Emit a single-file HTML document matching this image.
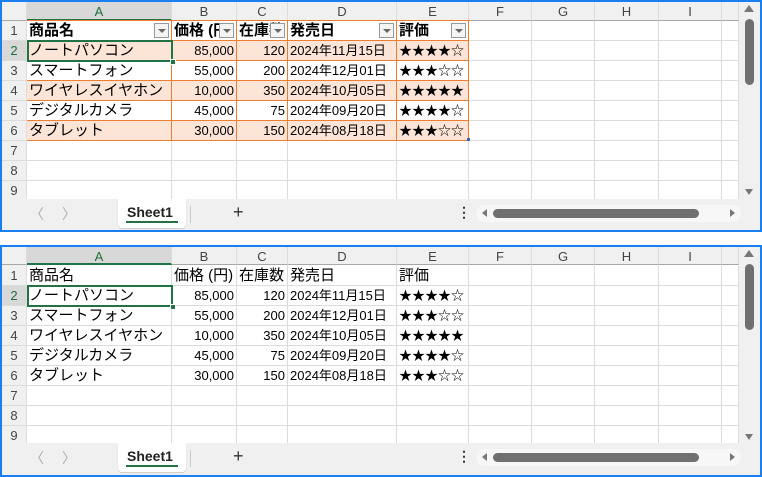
<!DOCTYPE html>
<html><head><meta charset="utf-8"><style>
*{box-sizing:border-box;margin:0;padding:0}
body{width:762px;height:477px;background:#fff;position:relative;overflow:hidden;font-family:"Liberation Sans","Noto Sans CJK JP",sans-serif;}
.panel{position:absolute;left:0;width:762px;border:2px solid #1a7ff0;background:#f0f0f0;overflow:hidden}
.grid{position:absolute;left:0;top:0;display:grid;grid-template-columns:25px 145px 65px 51px 109px 72px 63px 63px 64px 63px 17px;background:#fff}
.grid div{border-right:1px solid #dcdcdc;border-bottom:1px solid #dcdcdc;height:20px;font-size:13px;line-height:19px;white-space:nowrap;overflow:hidden;position:relative;color:#000;padding:0 2px}
.grid .ch{height:19px;background:#f0f0f0;color:#444;text-align:center;font-size:13px;line-height:19px;border-bottom:1px solid #a8a8a8;border-right:1px solid #dcdcdc}
.grid .ch.sel{background:#d8d8d8;color:#1e6e3c;border-bottom:2px solid #217346}
.grid .rh{background:#f0f0f0;color:#444;text-align:center;font-size:13px;padding:0}
.grid .rh.sel{background:#d8d8d8;color:#1e6e3c}
.grid .corner{background:#f0f0f0;border-bottom:1px solid #a8a8a8}
.grid .k{font-size:15px;line-height:19px}
.r{text-align:right}
.o{border-right-color:#ed7d31!important;border-bottom-color:#ed7d31!important}
.p{background:#fce4d6}
.b{font-weight:bold}
.fb{position:absolute;right:2px;top:2px;width:15px;height:15px;border:1px solid #999;background:#f4f4f4}
.fb:after{content:"";position:absolute;left:3px;top:5px;border-left:4px solid transparent;border-right:4px solid transparent;border-top:4px solid #666}
.tabbar{position:absolute;left:0;width:758px;height:30px;background:#f0f0f0}
.vs{position:absolute;left:737px;top:0;width:21px;background:#f0f0f0}
</style></head><body>

<!-- TOP PANEL -->
<div class="panel" style="top:0;height:232px">
 <div class="grid" style="grid-template-rows:19px repeat(9,20px)">
  <div class="ch corner"></div><div class="ch sel">A</div><div class="ch">B</div><div class="ch">C</div><div class="ch">D</div><div class="ch">E</div><div class="ch">F</div><div class="ch">G</div><div class="ch">H</div><div class="ch">I</div><div class="ch"></div>
  <div class="rh">1</div><div class="o b k">商品名<span class="fb"></span></div><div class="o b k">価格 (円)<span class="fb"></span></div><div class="o b k">在庫数<span class="fb"></span></div><div class="o b k">発売日<span class="fb"></span></div><div class="o b k">評価<span class="fb"></span></div><div></div><div></div><div></div><div></div><div></div>
  <div class="rh sel">2</div><div class="o p k">ノートパソコン</div><div class="o p r">85,000</div><div class="o p r">120</div><div class="o p">2024年11月15日</div><div class="o p">★★★★☆</div><div></div><div></div><div></div><div></div><div></div>
  <div class="rh">3</div><div class="o k">スマートフォン</div><div class="o r">55,000</div><div class="o r">200</div><div class="o">2024年12月01日</div><div class="o">★★★☆☆</div><div></div><div></div><div></div><div></div><div></div>
  <div class="rh">4</div><div class="o p k">ワイヤレスイヤホン</div><div class="o p r">10,000</div><div class="o p r">350</div><div class="o p">2024年10月05日</div><div class="o p">★★★★★</div><div></div><div></div><div></div><div></div><div></div>
  <div class="rh">5</div><div class="o k">デジタルカメラ</div><div class="o r">45,000</div><div class="o r">75</div><div class="o">2024年09月20日</div><div class="o">★★★★☆</div><div></div><div></div><div></div><div></div><div></div>
  <div class="rh">6</div><div class="o p k">タブレット</div><div class="o p r">30,000</div><div class="o p r">150</div><div class="o p">2024年08月18日</div><div class="o p">★★★☆☆</div><div></div><div></div><div></div><div></div><div></div>
  <div class="rh">7</div><div></div><div></div><div></div><div></div><div></div><div></div><div></div><div></div><div></div><div></div>
  <div class="rh">8</div><div></div><div></div><div></div><div></div><div></div><div></div><div></div><div></div><div></div><div></div>
  <div class="rh">9</div><div></div><div></div><div></div><div></div><div></div><div></div><div></div><div></div><div></div><div></div>
 </div>
 <div style="position:absolute;left:25px;top:18px;width:443px;height:1px;background:#ed7d31"></div>
 <div style="position:absolute;left:25px;top:38px;width:146px;height:22px;border:2px solid #217346"></div>
 <div style="position:absolute;left:168px;top:57px;width:6px;height:6px;background:#217346;border:1px solid #fff"></div>
 <div style="position:absolute;left:465px;top:136px;width:3px;height:3px;background:#4060c0"></div>
 <div class="vs" style="height:197px">
  <div style="position:absolute;left:5px;top:3px;border-left:5px solid transparent;border-right:5px solid transparent;border-bottom:7px solid #777"></div>
  <div style="position:absolute;left:6px;top:17px;width:9px;height:66px;border-radius:5px;background:#707070"></div>
  <div style="position:absolute;left:6px;top:187px;border-left:4px solid transparent;border-right:4px solid transparent;border-top:6px solid #777"></div>
 </div>
 <div class="tabbar" style="top:197px">
  <span style="position:absolute;left:28px;top:5px;color:#aaa;font-size:14px">〈</span>
  <span style="position:absolute;left:60px;top:5px;color:#aaa;font-size:14px">〉</span>
  <div style="position:absolute;left:116px;top:0;width:68px;height:29px;background:#fff;border-radius:0 0 4px 4px;box-shadow:0 1px 1px #ccc"></div>
  <span style="position:absolute;left:125px;top:5px;font-size:14px;font-weight:bold;color:#222">Sheet1</span>
  <div style="position:absolute;left:124px;top:22px;width:52px;height:2px;background:#217346"></div>
  <div style="position:absolute;left:188px;top:7px;width:1px;height:17px;background:#ccc"></div>
  <span style="position:absolute;left:231px;top:3px;font-size:18px;color:#333">+</span>
  <span style="position:absolute;left:455px;top:5px;font-size:14px;color:#333;font-weight:bold">⋮</span>
  <div style="position:absolute;left:474px;top:6px;width:265px;height:17px;border-radius:9px;background:#f7f7f7"></div>
  <div style="position:absolute;left:480px;top:10px;border-top:4px solid transparent;border-bottom:4px solid transparent;border-right:5px solid #777"></div>
  <div style="position:absolute;left:491px;top:10px;width:206px;height:9px;border-radius:5px;background:#707070"></div>
  <div style="position:absolute;left:728px;top:10px;border-top:4px solid transparent;border-bottom:4px solid transparent;border-left:5px solid #777"></div>
 </div>
</div>

<!-- BOTTOM PANEL -->
<div class="panel" style="top:245px;height:232px">
 <div class="grid" style="grid-template-rows:18px 21px repeat(8,20px)">
  <div class="ch corner" style="height:18px"></div><div class="ch sel" style="height:18px">A</div><div class="ch" style="height:18px">B</div><div class="ch" style="height:18px">C</div><div class="ch" style="height:18px">D</div><div class="ch" style="height:18px">E</div><div class="ch" style="height:18px">F</div><div class="ch" style="height:18px">G</div><div class="ch" style="height:18px">H</div><div class="ch" style="height:18px">I</div><div class="ch" style="height:18px"></div>
  <div class="rh" style="height:21px;line-height:21px">1</div><div class="k" style="height:21px;line-height:21px">商品名</div><div class="k" style="height:21px;line-height:21px">価格 (円)</div><div class="k" style="height:21px;line-height:21px">在庫数</div><div class="k" style="height:21px;line-height:21px">発売日</div><div class="k" style="height:21px;line-height:21px">評価</div><div style="height:21px"></div><div style="height:21px"></div><div style="height:21px"></div><div style="height:21px"></div><div style="height:21px"></div>
  <div class="rh sel">2</div><div class="k">ノートパソコン</div><div class="r">85,000</div><div class="r">120</div><div>2024年11月15日</div><div>★★★★☆</div><div></div><div></div><div></div><div></div><div></div>
  <div class="rh">3</div><div class="k">スマートフォン</div><div class="r">55,000</div><div class="r">200</div><div>2024年12月01日</div><div>★★★☆☆</div><div></div><div></div><div></div><div></div><div></div>
  <div class="rh">4</div><div class="k">ワイヤレスイヤホン</div><div class="r">10,000</div><div class="r">350</div><div>2024年10月05日</div><div>★★★★★</div><div></div><div></div><div></div><div></div><div></div>
  <div class="rh">5</div><div class="k">デジタルカメラ</div><div class="r">45,000</div><div class="r">75</div><div>2024年09月20日</div><div>★★★★☆</div><div></div><div></div><div></div><div></div><div></div>
  <div class="rh">6</div><div class="k">タブレット</div><div class="r">30,000</div><div class="r">150</div><div>2024年08月18日</div><div>★★★☆☆</div><div></div><div></div><div></div><div></div><div></div>
  <div class="rh">7</div><div></div><div></div><div></div><div></div><div></div><div></div><div></div><div></div><div></div><div></div>
  <div class="rh">8</div><div></div><div></div><div></div><div></div><div></div><div></div><div></div><div></div><div></div><div></div>
  <div class="rh">9</div><div></div><div></div><div></div><div></div><div></div><div></div><div></div><div></div><div></div><div></div>
 </div>
 <div style="position:absolute;left:25px;top:38px;width:146px;height:22px;border:2px solid #217346"></div>
 <div style="position:absolute;left:168px;top:57px;width:6px;height:6px;background:#217346;border:1px solid #fff"></div>
 <div class="vs" style="height:197px">
  <div style="position:absolute;left:5px;top:3px;border-left:5px solid transparent;border-right:5px solid transparent;border-bottom:7px solid #777"></div>
  <div style="position:absolute;left:6px;top:17px;width:9px;height:66px;border-radius:5px;background:#707070"></div>
  <div style="position:absolute;left:6px;top:187px;border-left:4px solid transparent;border-right:4px solid transparent;border-top:6px solid #777"></div>
 </div>
 <div class="tabbar" style="top:196px">
  <span style="position:absolute;left:28px;top:5px;color:#aaa;font-size:14px">〈</span>
  <span style="position:absolute;left:60px;top:5px;color:#aaa;font-size:14px">〉</span>
  <div style="position:absolute;left:116px;top:0;width:68px;height:29px;background:#fff;border-radius:0 0 4px 4px;box-shadow:0 1px 1px #ccc"></div>
  <span style="position:absolute;left:125px;top:5px;font-size:14px;font-weight:bold;color:#222">Sheet1</span>
  <div style="position:absolute;left:124px;top:22px;width:52px;height:2px;background:#217346"></div>
  <div style="position:absolute;left:188px;top:7px;width:1px;height:17px;background:#ccc"></div>
  <span style="position:absolute;left:231px;top:3px;font-size:18px;color:#333">+</span>
  <span style="position:absolute;left:455px;top:5px;font-size:14px;color:#333;font-weight:bold">⋮</span>
  <div style="position:absolute;left:474px;top:6px;width:265px;height:17px;border-radius:9px;background:#f7f7f7"></div>
  <div style="position:absolute;left:480px;top:10px;border-top:4px solid transparent;border-bottom:4px solid transparent;border-right:5px solid #777"></div>
  <div style="position:absolute;left:491px;top:10px;width:206px;height:9px;border-radius:5px;background:#707070"></div>
  <div style="position:absolute;left:728px;top:10px;border-top:4px solid transparent;border-bottom:4px solid transparent;border-left:5px solid #777"></div>
 </div>
</div>
</body></html>
